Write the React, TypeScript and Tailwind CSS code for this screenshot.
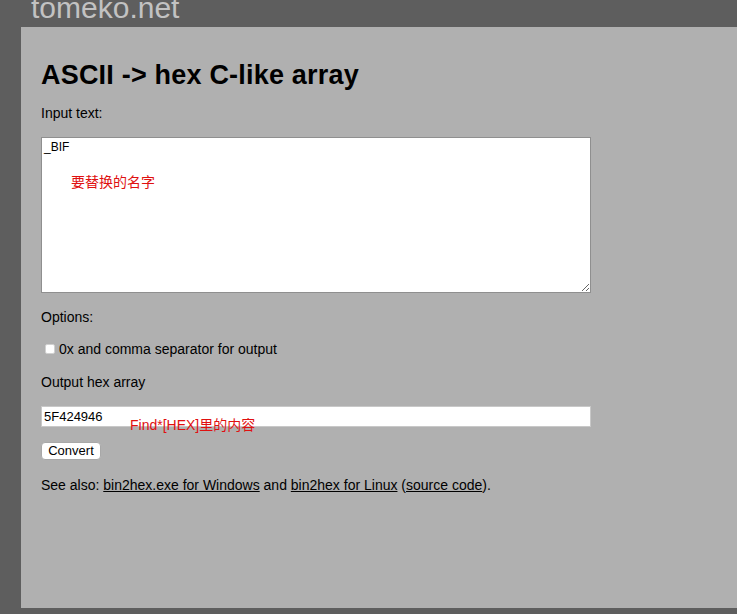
export default function App() {
  const font = { fontFamily: '"Liberation Sans", Arial, "Noto Sans CJK SC", sans-serif' };
  return (
    <div
      className="flex h-[614px] w-[737px] flex-col overflow-hidden bg-[#5e5e5e] font-['Liberation_Sans','Noto_Sans_CJK_SC',sans-serif]"
    >
      {/* site header, title is cut off at the top */}
      <div className="h-[27px] shrink-0 overflow-hidden pl-[31px]">
        <div className="-mt-[7px] text-[30px] leading-[30px] text-[#c2c2c2]">tomeko.net</div>
      </div>

      <div className="ml-[21px] mb-[6px] flex-1 bg-[#b0b0b0] pl-[20px] pt-[33px] text-[14px] text-black">
        <h1 className="text-[27px] font-bold leading-[30px] tracking-[0.2px]">ASCII -&gt; hex C-like array</h1>

        <p className="mt-[15px] leading-[16px]">Input text:</p>

        <div className="relative mt-[16px] w-[550px]">
          <textarea
            readOnly
            defaultValue="_BIF"
            className="block h-[156px] w-[550px] resize border border-[#8f8f8f] bg-white px-[2px] py-[2px] text-[12px] leading-[15px] text-black"
            style={font}
          />
          <span className="absolute left-[30px] top-[35px] text-[14px] text-[#e01010]">要替换的名字</span>
        </div>

        <p className="mt-[16px] leading-[16px]">Options:</p>

        <label className="mt-[16px] flex items-center leading-[16px]">
          <span className="ml-[4px] mr-[4px] inline-block h-[10px] w-[10px] rounded-[2px] border border-[#d0d0d0] bg-white" />
          0x and comma separator for output
        </label>

        <p className="mt-[17px] leading-[16px]">Output hex array</p>

        <div className="relative mt-[16px] w-[550px]">
          <input
            readOnly
            value="5F424946"
            className="block h-[21px] w-[550px] border border-[#c8c8c8] bg-white px-[2px] text-[13px] text-black outline-none"
            style={font}
          />
          <span className="absolute left-[89px] top-[11px] text-[14px] leading-[16px] text-[#e01010]">Find*[HEX]里的内容</span>
        </div>

        <button className="mt-[15px] block h-[18px] w-[60px] rounded-[4px] border border-[#a8a8a8] bg-white text-[13px] leading-[14px] text-black">
          Convert
        </button>

        <p className="mt-[17px] leading-[16px]">
          See also: <a className="underline">bin2hex.exe for Windows</a> and{" "}
          <a className="underline">bin2hex for Linux</a> (<a className="underline">source code</a>).
        </p>
      </div>
    </div>
  );
}
